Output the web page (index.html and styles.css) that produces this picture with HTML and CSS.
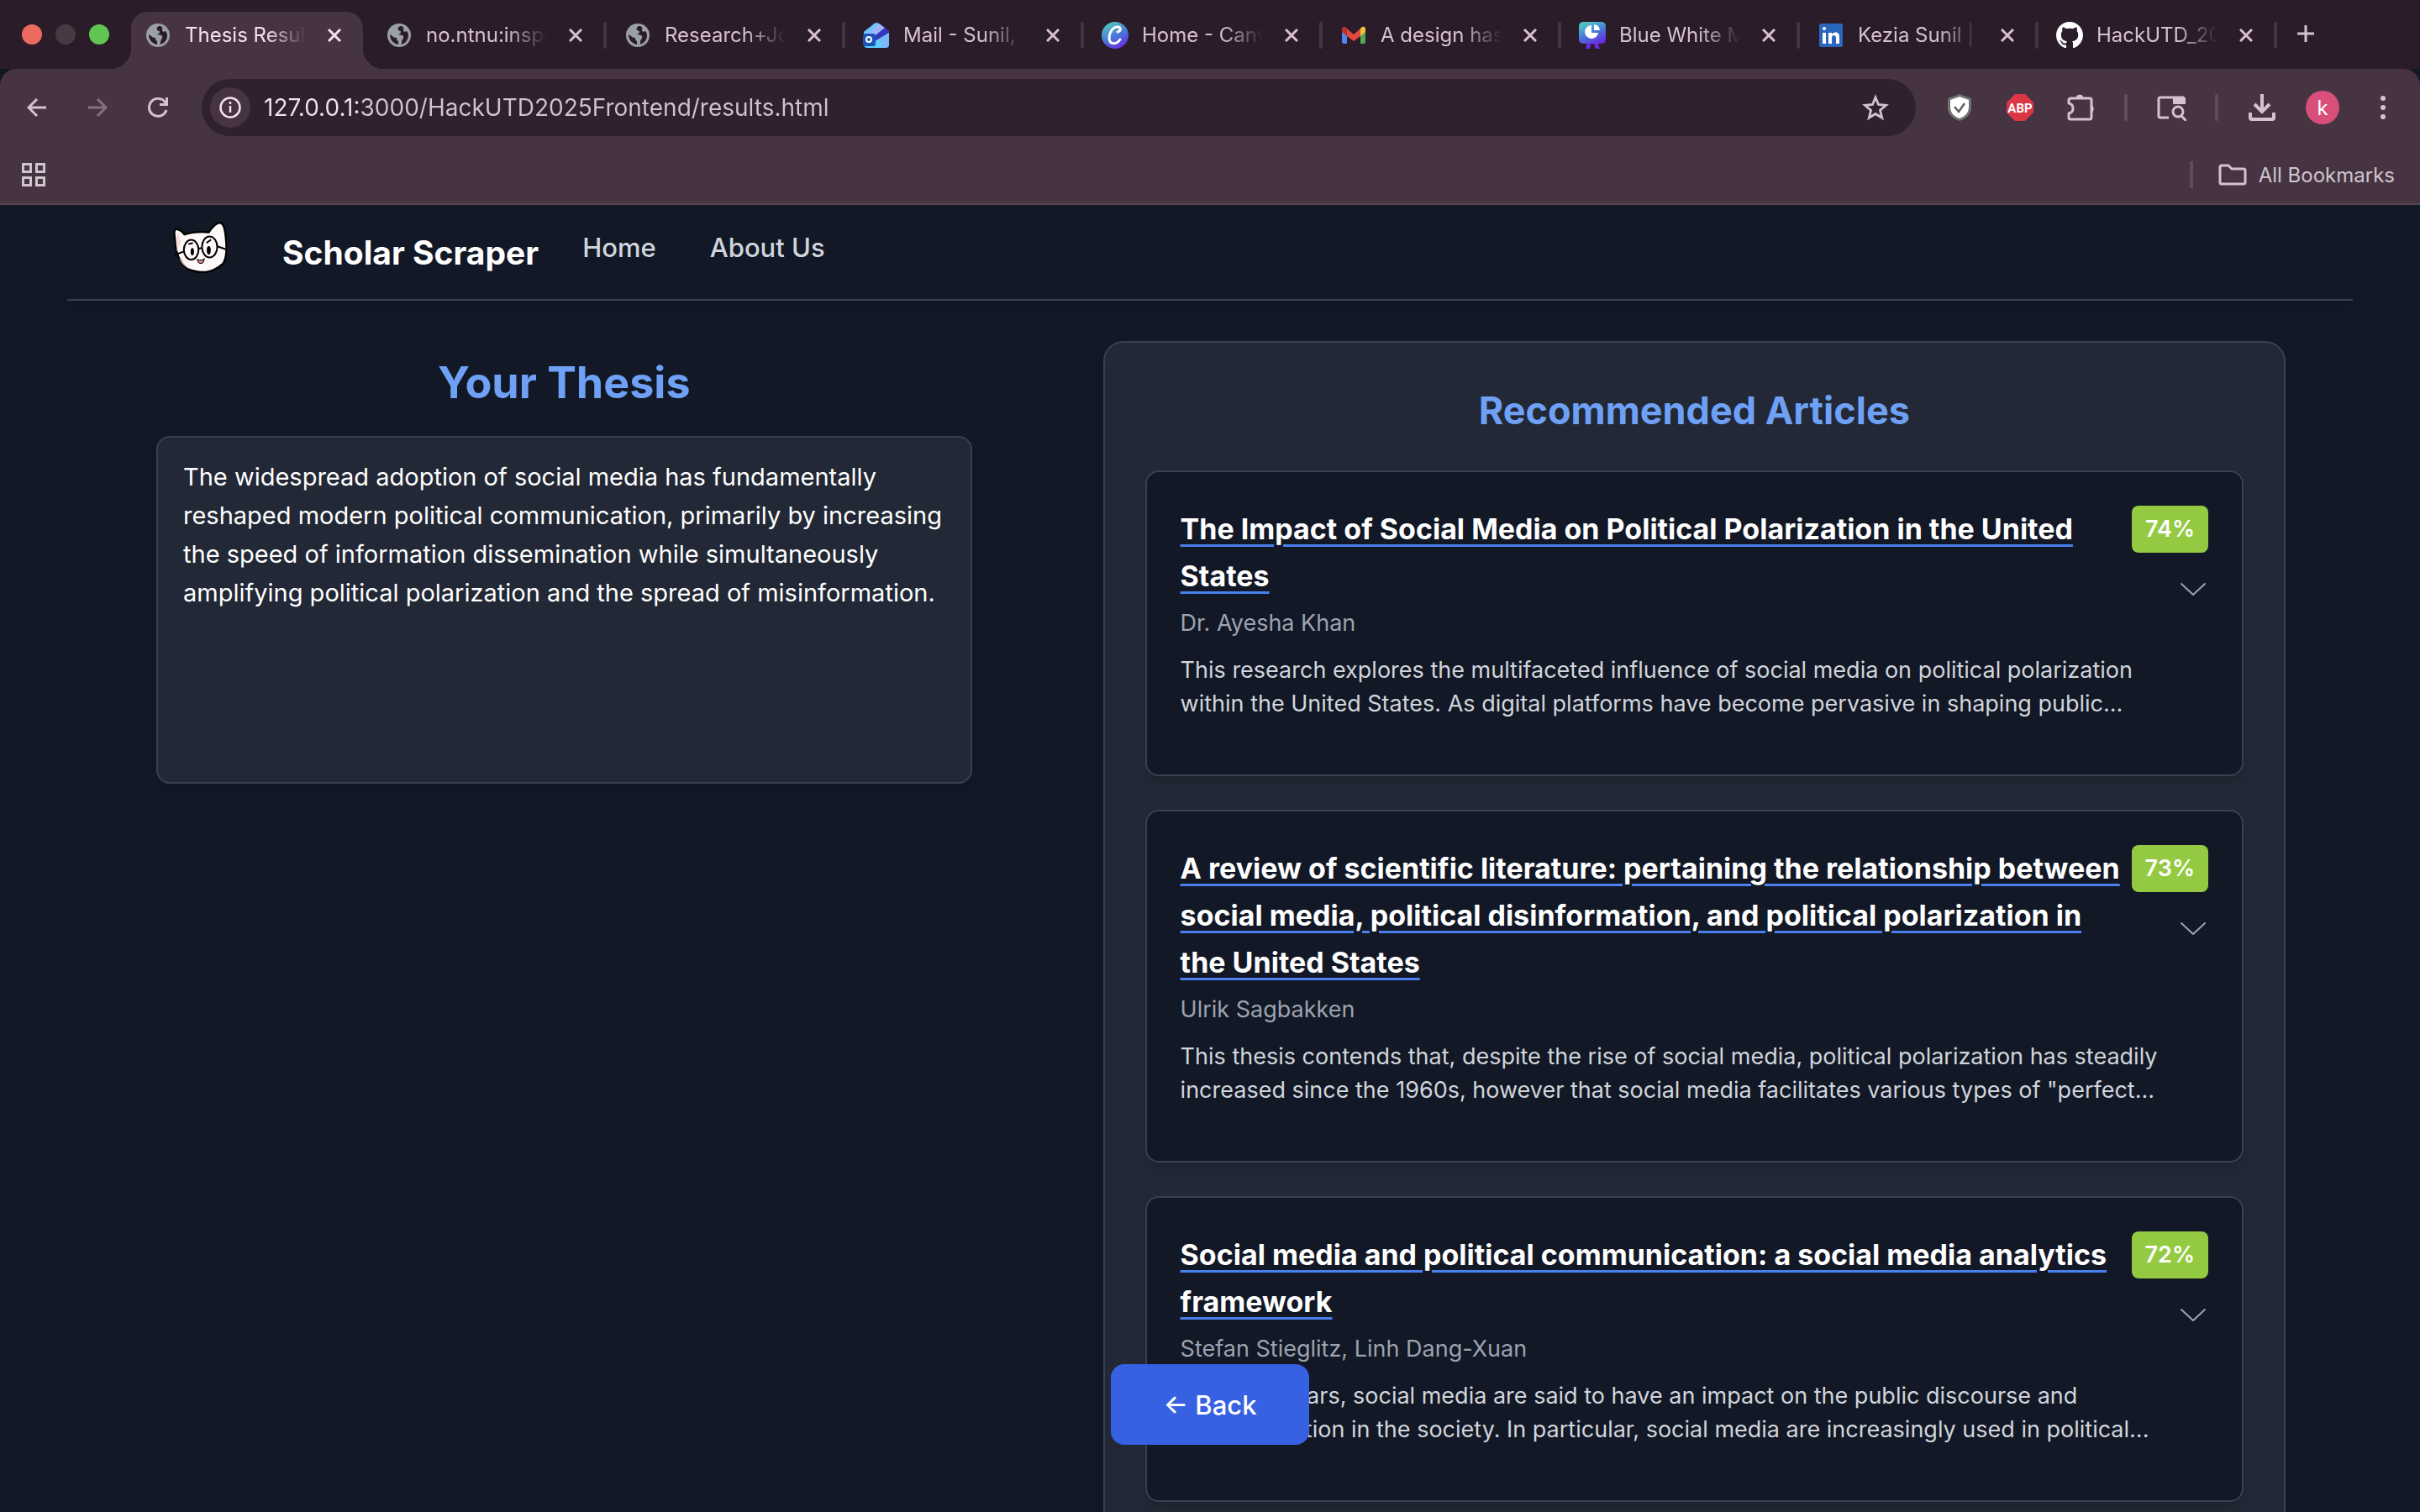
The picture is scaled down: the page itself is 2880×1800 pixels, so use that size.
FILE: index.html
```html
<!DOCTYPE html>
<html lang="en">
<head>
  <meta charset="utf-8">
  <meta name="viewport" content="width=device-width, initial-scale=1">
  <title>Thesis Results</title>
  <link rel="stylesheet" href="styles.css">
</head>
<body>
  <!-- shared icons -->
  <svg class="sprite" aria-hidden="true">
    <symbol id="globe" viewBox="0 0 28 28">
      <circle cx="14" cy="14" r="14" fill="#9aa0a6"/>
      <path d="M15 3c-2 1-3 3-2 5 1 1 3 0 3 2s-2 2-3 3c2 1 5 0 6 2 1 3-2 4-2 7 0 1 0 2-1 3 5-1 9-5 9-11 0-2-1-4-2-5-2 1-4 1-4-1 0-1 1-2 0-3-1-2-2-2-4-2zM3 13c0 6 4 11 10 12v-4c-2-1-2-2-2-4-3 0-4-1-5-2z" fill="#2a1c29"/>
    </symbol>
    <symbol id="close" viewBox="0 0 16 16">
      <path d="M1 1l14 14M15 1L1 15" fill="none" stroke="currentColor" stroke-width="3"/>
    </symbol>
    <symbol id="chevron" viewBox="0 0 32 24">
      <path d="M2 5l14 13L30 5" fill="none" stroke="currentColor" stroke-width="2" stroke-linecap="round" stroke-linejoin="round"/>
    </symbol>
  </svg>

  <div class="browser">
    <div class="tabstrip">
      <div class="lights">
        <span class="light red"></span>
        <span class="light grey"></span>
        <span class="light green"></span>
      </div>
      <div class="tab active">
        <svg class="favicon"><use href="#globe"/></svg>
        <span class="tab-title">Thesis Results</span>
        <button class="tab-close" aria-label="Close tab"><svg><use href="#close"/></svg></button>
      </div>
      <div class="tab">
        <svg class="favicon"><use href="#globe"/></svg>
        <span class="tab-title">no.ntnu:inspera</span>
        <button class="tab-close" aria-label="Close tab"><svg><use href="#close"/></svg></button>
      </div>
      <div class="tab">
        <svg class="favicon"><use href="#globe"/></svg>
        <span class="tab-title">Research+Journal</span>
        <button class="tab-close" aria-label="Close tab"><svg><use href="#close"/></svg></button>
      </div>
      <div class="tab">
        <svg class="favicon big" viewBox="0 0 32 32">
          <path d="M1 12L13 2q3-2 6 0l12 9v16q0 4-4 4H5q-4 0-4-4z" fill="#3b7fe0"/>
          <path d="M1 12L14 2q3-2 6 1L6 16H1z" fill="#6fc4fb"/>
          <path d="M5 16L19 2l7 5L10 20z" fill="#9db6fa"/>
          <path d="M14 17l12-10 5 4v2l-16 10z" fill="#3537bd"/>
          <path d="M31 13v14q0 4-4 4H17l-3-8z" fill="#7db9fa"/>
          <path d="M2 28q8-6 15-6 8 2 4 9H5q-3 0-3-3z" fill="#5fd0fa"/>
          <rect x="0" y="14" width="15" height="15" rx="3" fill="#1a55b5"/>
          <circle cx="7" cy="21" r="3" fill="none" stroke="#fff" stroke-width="2"/>
        </svg>
        <span class="tab-title">Mail - Sunil, Kezia</span>
        <button class="tab-close" aria-label="Close tab"><svg><use href="#close"/></svg></button>
      </div>
      <div class="tab">
        <svg class="favicon big" viewBox="0 0 32 32">
          <defs>
            <linearGradient id="canva" x1="0.2" y1="0" x2="0.7" y2="1">
              <stop offset="0.1" stop-color="#4fc0c4"/>
              <stop offset="0.55" stop-color="#4a76d8"/>
              <stop offset="1" stop-color="#6a2be0"/>
            </linearGradient>
          </defs>
          <circle cx="16" cy="16" r="16" fill="url(#canva)"/>
          <path d="M19 12c4-1 5-6 0-6-6 0-10 7-10 13 0 9 9 8 13 2" fill="none" stroke="#fff" stroke-width="3" stroke-linecap="round"/>
        </svg>
        <span class="tab-title">Home - Canva</span>
        <button class="tab-close" aria-label="Close tab"><svg><use href="#close"/></svg></button>
      </div>
      <div class="tab">
        <svg class="favicon big" viewBox="0 0 32 32">
          <path d="M2 9v15q0 2 2 2h4V13z" fill="#4d86ee"/>
          <path d="M30 9v15q0 2-2 2h-4V13z" fill="#53a653"/>
          <path d="M8 8l8 7 8-7v9l-8 6-8-6z" fill="#e04b3d"/>
          <path d="M2 9q0-4 4-3l2 2v9l-6-5z" fill="#b8332c"/>
          <path d="M30 9q0-4-4-3l-2 2v9l6-5z" fill="#f3bf3b"/>
        </svg>
        <span class="tab-title">A design has been</span>
        <button class="tab-close" aria-label="Close tab"><svg><use href="#close"/></svg></button>
      </div>
      <div class="tab">
        <svg class="favicon big" viewBox="0 0 32 32">
          <path d="M10 24h5l-2 8H8zM17 24h5l3 8h-5z" fill="#6d2be0"/>
          <rect width="32" height="26" rx="5" fill="url(#canva)"/>
          <path d="M15 4v9h8a8 8 0 1 1-8-9z" fill="#fff"/>
          <path d="M18 3a8 8 0 0 1 7 7h-7z" fill="#fff"/>
        </svg>
        <span class="tab-title">Blue White Modern</span>
        <button class="tab-close" aria-label="Close tab"><svg><use href="#close"/></svg></button>
      </div>
      <div class="tab">
        <svg class="favicon" viewBox="0 0 28 28">
          <rect width="28" height="28" rx="2" fill="#2a66bc"/>
          <path d="M4 11h4v13H4zM11 11h4v2c3-4 9-3 9 3v8h-4v-7c0-4-5-4-5 0v7h-4z" fill="#fff"/>
          <circle cx="6" cy="6" r="2" fill="#fff"/>
        </svg>
        <span class="tab-title">Kezia Sunil | LinkedIn</span>
        <button class="tab-close" aria-label="Close tab"><svg><use href="#close"/></svg></button>
      </div>
      <div class="tab">
        <svg class="favicon big" viewBox="0 0 16 16">
          <path d="M8 0C3.58 0 0 3.58 0 8c0 3.54 2.29 6.53 5.47 7.59.4.07.55-.17.55-.38 0-.19-.01-.82-.01-1.49-2.01.37-2.53-.49-2.69-.94-.09-.23-.48-.94-.82-1.13-.28-.15-.68-.52-.01-.53.63-.01 1.08.58 1.23.82.72 1.21 1.87.87 2.33.66.07-.52.28-.87.51-1.07-1.78-.2-3.64-.89-3.64-3.95 0-.87.31-1.59.82-2.15-.08-.2-.36-1.02.08-2.12 0 0 .67-.21 2.2.82.64-.18 1.32-.27 2-.27s1.36.09 2 .27c1.53-1.04 2.2-.82 2.2-.82.44 1.1.16 1.92.08 2.12.51.56.82 1.27.82 2.15 0 3.07-1.87 3.75-3.65 3.95.29.25.54.73.54 1.48 0 1.07-.01 1.93-.01 2.2 0 .21.15.46.55.38A8.01 8.01 0 0 0 16 8c0-4.42-3.58-8-8-8z" fill="#fff"/>
        </svg>
        <span class="tab-title">HackUTD_2025</span>
        <button class="tab-close" aria-label="Close tab"><svg><use href="#close"/></svg></button>
      </div>
      <button class="new-tab" aria-label="New tab">
        <svg viewBox="0 0 20 20"><path d="M10 0v20M0 10h20" fill="none" stroke="currentColor" stroke-width="3"/></svg>
      </button>
    </div>

    <div class="toolbar">
      <button class="tool" aria-label="Back">
        <svg viewBox="0 0 24 24"><path d="M23 12H2M12 2L2 12l10 10" fill="none" stroke="currentColor" stroke-width="3"/></svg>
      </button>
      <button class="tool dim" aria-label="Forward">
        <svg viewBox="0 0 24 24"><path d="M1 12h21M12 2l10 10-10 10" fill="none" stroke="currentColor" stroke-width="3"/></svg>
      </button>
      <button class="tool" aria-label="Reload">
        <svg viewBox="0 0 24 24"><path d="M22 15a10.500 10.500 0 1 1-2-10l2 3" fill="none" stroke="currentColor" stroke-width="3"/><path d="M24 0v10H14V7h7V0z" fill="currentColor"/></svg>
      </button>
      <div class="omnibox">
        <button class="site-info" aria-label="Site information">
          <svg viewBox="0 0 26 26"><circle cx="13" cy="13" r="11.500" fill="none" stroke="currentColor" stroke-width="2.500"/><path d="M13 11v8M13 6v3" stroke="currentColor" stroke-width="2.500"/></svg>
        </button>
        <input class="url" type="text" aria-label="Address" value="127.0.0.1:3000/HackUTD2025Frontend/results.html">
        <button class="star" aria-label="Bookmark this tab">
          <svg viewBox="0 0 32 32"><path d="M16 4l3.500 8.500 9 .8-7 6 2.200 9L16 23.500l-7.700 4.800 2.200-9-7-6 9-.8z" fill="none" stroke="currentColor" stroke-width="2.800"/></svg>
        </button>
      </div>
      <div class="extensions">
        <button class="ext" aria-label="Shield">
          <svg viewBox="0 0 32 32"><path d="M16 0l14 5v11q0 11-14 16Q2 27 2 16V5z" fill="#6d7370"/><path d="M16 3l11 4v9q0 9-11 13Q5 25 5 16V7z" fill="#fff"/><path d="M10 15l5 6 7-10" fill="none" stroke="#5c615f" stroke-width="2.500"/></svg>
        </button>
        <button class="ext" aria-label="Adblock">
          <svg viewBox="0 0 32 32"><path d="M10 0h12l10 10v12L22 32H10L0 22V10z" fill="#dc3545"/><text x="16" y="22" text-anchor="middle" class="abp">ABP</text></svg>
        </button>
        <button class="ext" aria-label="Extensions">
          <svg viewBox="0 0 32 32"><path d="M5 5h22q2 0 2 2v20q0 3-2 3H4q-2 0-2-2v-5q5-1 5-6t-5-6V7q0-2 3-2z" fill="none" stroke="currentColor" stroke-width="3" stroke-linejoin="round"/><path d="M11 5a4 4 0 0 1 8 0zM29 13a4 5 0 0 1 0 9z" fill="currentColor" stroke="currentColor"/></svg>
        </button>
        <span class="divider"></span>
        <button class="ext" aria-label="Search side panel">
          <svg class="wide" viewBox="0 0 36 32"><path d="M15 28H5q-2 0-2-2V6q0-2 2-2h28" fill="none" stroke="currentColor" stroke-width="3"/><path d="M20 3h12q3 0 3 3v6H20z" fill="currentColor"/><circle cx="26" cy="21" r="6" fill="none" stroke="currentColor" stroke-width="3"/><path d="M30 26l6 6" stroke="currentColor" stroke-width="3"/></svg>
        </button>
        <span class="divider"></span>
        <button class="ext" aria-label="Downloads">
          <svg viewBox="0 0 32 32"><path d="M16 0v20M7 12l9 9 9-9" fill="none" stroke="currentColor" stroke-width="4"/><path d="M2 22v6q0 2 2 2h24q2 0 2-2v-6" fill="none" stroke="currentColor" stroke-width="4"/></svg>
        </button>
        <button class="avatar">k</button>
        <button class="ext menu" aria-label="Menu">
          <svg viewBox="0 0 32 32"><circle cx="16" cy="5" r="3"/><circle cx="16" cy="16" r="3"/><circle cx="16" cy="27" r="3"/></svg>
        </button>
      </div>
    </div>

    <div class="bookmarks">
      <button class="apps" aria-label="Apps">
        <svg viewBox="0 0 28 28"><path d="M1.500 1.500h9v9h-9zM17.500 1.500h9v9h-9zM1.500 17.500h9v9h-9zM17.500 17.500h9v9h-9z" fill="none" stroke="currentColor" stroke-width="3"/></svg>
      </button>
      <button class="all-bookmarks">
        <svg viewBox="0 0 34 26"><path d="M4 2h8l4 4h14q2 0 2 2v14q0 2-2 2H4q-2 0-2-2V4q0-2 2-2z" fill="none" stroke="currentColor" stroke-width="3"/></svg>
        All Bookmarks
      </button>
    </div>

    <div class="page">
      <header class="header">
        <svg class="logo" viewBox="0 0 190 184">
          <path d="M6 60Q0 24 16 30q14 4 24 18 36-12 86-8Q150 4 168 7q14 4 18 50 8 70-10 94-34 32-78 30-50-2-74-44Q8 110 6 60z" fill="#fff8f8" stroke="#000" stroke-width="7"/>
          <path d="M12 60q2-16 10-24-4 20 6 34L14 108zM20 130q24 34 56 42-36 0-56-42z" fill="#fbdcdc"/>
          <g fill="none" stroke="#000" stroke-width="6">
            <ellipse cx="64" cy="102" rx="26" ry="35"/>
            <ellipse cx="129" cy="92" rx="27" ry="37"/>
            <path d="M6 120l32-12M88 98l14-2M156 90l30 10M54 82l16-4M118 78l16-12"/>
          </g>
          <ellipse cx="68" cy="109" rx="6" ry="13"/>
          <ellipse cx="126" cy="104" rx="7" ry="15"/>
          <path d="M86 136q6 4 12 2 6 2 12-4-2 16-12 16t-12-14z" fill="#f3919b" stroke="#000" stroke-width="3"/>
        </svg>
        <span class="brand">Scholar Scraper</span>
        <nav class="nav">
          <a href="#">Home</a>
          <a href="#">About Us</a>
        </nav>
      </header>

      <main class="main">
        <section class="thesis">
          <h1>Your Thesis</h1>
          <div class="thesis-box">The widespread adoption of social media has fundamentally reshaped modern political communication, primarily by increasing the speed of information dissemination while simultaneously amplifying political polarization and the spread of misinformation.</div>
        </section>

        <section class="articles">
          <h2>Recommended Articles</h2>

          <article class="card">
            <div class="card-top">
              <h3><a href="#">The Impact of Social Media on Political Polarization in the United States</a></h3>
              <div class="card-side">
                <span class="score">74%</span>
                <button class="expand" aria-label="Expand"><svg><use href="#chevron"/></svg></button>
              </div>
            </div>
            <p class="author">Dr. Ayesha Khan</p>
            <p class="abstract">This research explores the multifaceted influence of social media on political polarization within the United States. As digital platforms have become pervasive in shaping public...</p>
          </article>

          <article class="card">
            <div class="card-top">
              <h3><a href="#">A review of scientific literature: pertaining the relationship between social media, political disinformation, and political polarization in the United States</a></h3>
              <div class="card-side">
                <span class="score">73%</span>
                <button class="expand" aria-label="Expand"><svg><use href="#chevron"/></svg></button>
              </div>
            </div>
            <p class="author">Ulrik Sagbakken</p>
            <p class="abstract">This thesis contends that, despite the rise of social media, political polarization has steadily increased since the 1960s, however that social media facilitates various types of "perfect...</p>
          </article>

          <article class="card">
            <div class="card-top">
              <h3><a href="#">Social media and political communication: a social media analytics framework</a></h3>
              <div class="card-side">
                <span class="score">72%</span>
                <button class="expand" aria-label="Expand"><svg><use href="#chevron"/></svg></button>
              </div>
            </div>
            <p class="author">Stefan Stieglitz, Linh Dang-Xuan</p>
            <p class="abstract">In recent years, social media are said to have an impact on the public discourse and communication in the society. In particular, social media are increasingly used in political...</p>
          </article>
        </section>
      </main>

      <button class="back">← Back</button>
    </div>
  </div>
</body>
</html>
```
FILE: styles.css
```css
* {
  box-sizing: border-box;
}
body {
  margin: 0;
  background: #121826;
  color: #fff;
  font-family: Inter, "Liberation Sans", sans-serif;
}
h1, h2, h3, p {
  margin: 0;
}
button {
  display: flex;
  align-items: center;
  justify-content: center;
  padding: 0;
  border: none;
  background: none;
  color: inherit;
  font: inherit;
  cursor: pointer;
}
.sprite {
  display: none;
}
.browser {
  display: flex;
  flex-direction: column;
  height: 100vh;
  overflow: hidden;
}

/* tab strip */
.tabstrip {
  display: flex;
  height: 82px;
  background: #2a1c29;
  color: #d8c0d4;
}
.lights {
  display: flex;
  align-items: center;
  gap: 16px;
  width: 154px;
  padding-left: 26px;
}
.light {
  width: 24px;
  height: 24px;
  border-radius: 50%;
}
.red {
  background: #ec6a5e;
}
.grey {
  background: #463a43;
}
.green {
  background: #61c554;
}
.tab {
  position: relative;
  display: flex;
  align-items: center;
  flex: 0 1 284px;
  height: 68px;
  margin-top: 8px;
  padding-left: 21px;
}
.tab::after {
  content: "";
  position: absolute;
  right: 0;
  top: 18px;
  width: 4px;
  height: 32px;
  border-radius: 2px;
  background: #463443;
}
.tab.active {
  flex: 0 1 276px;
  height: 68px;
  margin: 14px 6px 0 2px;
  padding: 0 0 12px 16px;
  border-radius: 20px 20px 0 0;
  background: #463443;
  color: #f3e3ee;
}
.tab.active::before,
.tab.active::after {
  content: "";
  position: absolute;
  top: auto;
  bottom: 0;
  width: 24px;
  height: 24px;
  border-radius: 0;
  background: radial-gradient(circle at 0 0, transparent 24px, #463443 24px);
}
.tab.active::before {
  left: -24px;
}
.tab.active::after {
  right: -24px;
  background: radial-gradient(circle at 100% 0, transparent 24px, #463443 24px);
}
.favicon {
  flex: none;
  width: 28px;
  height: 28px;
  margin: 0 18px 0 2px;
}
.favicon.big {
  width: 32px;
  height: 32px;
  margin: 0 16px 0 0;
}
.tab-title {
  width: 144px;
  overflow: hidden;
  white-space: nowrap;
  font-size: 24px;
  line-height: 32px;
  -webkit-mask-image: linear-gradient(90deg, #000 96px, transparent);
  mask-image: linear-gradient(90deg, #000 96px, transparent);
}
.tab-close {
  width: 32px;
  height: 32px;
  margin-left: 18px;
}
.tab-close svg {
  width: 16px;
  height: 16px;
}
.new-tab {
  width: 48px;
  height: 64px;
  margin: 8px 0 0 10px;
}
.new-tab svg {
  width: 20px;
  height: 20px;
}

/* toolbar */
.toolbar {
  display: flex;
  align-items: center;
  height: 92px;
  padding: 0 18px 0 20px;
  border-radius: 20px 20px 0 0;
  background: #463443;
  box-shadow: 0 -20px 0 -10px #2a1c29;
  color: #d8c0d4;
}
.tool {
  width: 48px;
  height: 48px;
  margin-right: 24px;
}
.tool svg {
  width: 24px;
  height: 24px;
}
.dim {
  color: #86707f;
}
.omnibox {
  display: flex;
  align-items: center;
  flex: 1;
  height: 68px;
  margin-left: 4px;
  padding: 0 32px 0 10px;
  border-radius: 34px;
  background: #2f212f;
  color: #d1c4cc;
}
.site-info {
  width: 48px;
  height: 48px;
  border-radius: 50%;
  background: #463443;
  color: #f3e3ee;
}
.site-info svg {
  width: 26px;
  height: 26px;
}
.url {
  flex: 1;
  margin-left: 16px;
  padding: 0;
  border: none;
  outline: none;
  /* host is brighter than the path */
  background: linear-gradient(90deg, #f3e3ee 116px, #d1c4cc 116px);
  -webkit-background-clip: text;
  background-clip: text;
  color: transparent;
  font: 28px/36px Inter, "Liberation Sans", sans-serif;
}
.star svg {
  display: block;
  width: 32px;
  height: 32px;
}
.extensions {
  display: flex;
  align-items: center;
  gap: 20px;
  padding-left: 26px;
}
.ext {
  width: 52px;
  height: 52px;
}
.ext svg {
  width: 32px;
  height: 32px;
}
.ext .wide {
  width: 36px;
}
.abp {
  fill: #fff;
  font: bold 15px Roboto, sans-serif;
}
.divider {
  width: 4px;
  height: 32px;
  margin: 0 6px;
  border-radius: 2px;
  background: #5f4d5d;
}
.avatar {
  width: 40px;
  height: 40px;
  margin: 0 6px;
  border-radius: 50%;
  background: #d94f7c;
  color: #fff;
  font-size: 24px;
}
.menu svg {
  fill: currentColor;
}

/* bookmarks bar */
.bookmarks {
  display: flex;
  align-items: center;
  justify-content: space-between;
  height: 70px;
  padding: 0 30px 0 26px;
  border-bottom: 2px solid #54444f;
  background: #463443;
  color: #d1c4cc;
}
.apps svg {
  width: 28px;
  height: 28px;
}
.all-bookmarks {
  height: 32px;
  padding-left: 30px;
  border-left: 4px solid #5f4d5d;
  font-size: 24px;
  gap: 14px;
}
.all-bookmarks svg {
  width: 34px;
  height: 26px;
}

/* page */
.page {
  flex: 1;
  padding: 0 80px;
  overflow: hidden;
}
.header {
  display: flex;
  align-items: center;
  height: 114px;
  padding: 0 126px;
  border-bottom: 2px solid #374151;
  box-shadow: 0 8px 12px -4px rgba(0, 0, 0, 0.1);
}
.logo {
  width: 64px;
  height: 62px;
  margin-bottom: 12px;
}
.brand {
  margin-left: 66px;
  font-size: 39px;
  font-weight: 700;
}
.nav {
  display: flex;
  gap: 64px;
  margin: 0 0 12px 52px;
  font-size: 31px;
  font-weight: 500;
}
.nav a {
  color: #d1d5db;
  text-decoration: none;
}
.main {
  display: grid;
  grid-template-columns: 20fr 29fr;
  gap: 156px;
  align-items: start;
  padding: 48px 80px 0 106px;
}
h1, h2 {
  color: #6ea1f5;
  font-weight: 700;
  text-align: center;
}
h1 {
  margin-bottom: 13px;
  font-size: 52px;
  line-height: 100px;
}
.thesis-box {
  min-height: 414px;
  padding: 24px 30px;
  border: 2px solid #374151;
  border-radius: 16px;
  background: #222835;
  box-shadow: 0 8px 12px -2px rgba(0, 0, 0, 0.15);
  font-size: 29px;
  line-height: 46px;
}
.articles {
  padding: 48px;
  border: 2px solid #374151;
  border-radius: 24px;
  background: #222835;
  box-shadow: 0 8px 12px -2px rgba(0, 0, 0, 0.15);
}
h2 {
  margin-bottom: 38px;
  font-size: 45px;
  line-height: 66px;
}
.card {
  margin-bottom: 40px;
  padding: 40px 40px 64px;
  border: 2px solid #374151;
  border-radius: 16px;
  background: #121826;
  box-shadow: 0 8px 12px -2px rgba(0, 0, 0, 0.15);
}
.card-top {
  display: flex;
  align-items: flex-start;
}
h3 {
  flex: 1;
  font-size: 34px;
  font-weight: 700;
  line-height: 56px;
}
h3 a {
  color: #fff;
  text-decoration: underline;
  text-decoration-color: #4a80ee;
  text-decoration-thickness: 3px;
  text-underline-offset: 6px;
}
.card-side {
  display: flex;
  flex-direction: column;
  align-items: flex-end;
  gap: 32px;
}
.score {
  padding: 0 16px;
  border-radius: 8px;
  background: #94ca42;
  font-size: 27px;
  font-weight: 600;
  line-height: 56px;
}
.expand {
  width: 36px;
  height: 24px;
  color: #9ca3af;
}
.expand svg {
  width: 32px;
  height: 24px;
}
.author {
  padding: 8px 0 16px;
  color: #9ca3af;
  font-size: 27px;
  line-height: 40px;
}
.abstract {
  padding-right: 32px;
  color: #d1d5db;
  font-size: 27px;
  line-height: 40px;
}
.back {
  position: fixed;
  bottom: 80px;
  left: 50%;
  width: 236px;
  height: 96px;
  margin-left: -118px;
  border-radius: 16px;
  background: #3761e3;
  font-size: 31px;
  font-weight: 500;
}
```
